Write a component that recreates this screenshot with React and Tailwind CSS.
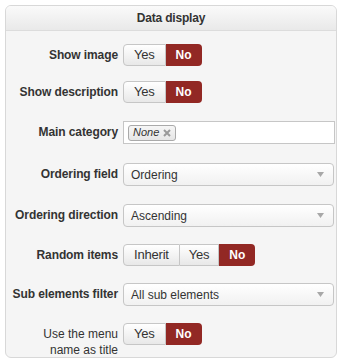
import React from 'react';

const Label = ({ children, bold = true }) => (
  <div
    className={`w-[112px] shrink-0 pt-[3px] text-right text-[12px] leading-[16px] text-[#333] ${bold ? 'font-bold tracking-[-0.1px]' : 'font-normal'}`}
  >
    {children}
  </div>
);

const Toggle = ({ options, active }) => (
  <div className="flex h-[22px]">
    {options.map((opt, i) => {
      const first = i === 0;
      const last = i === options.length - 1;
      if (opt === active) {
        return (
          <div
            key={opt}
            className={`flex items-center px-[10px] bg-[#922824] text-[12px] font-bold text-white ${last ? 'rounded-r-[4px]' : ''}`}
          >
            {opt}
          </div>
        );
      }
      return (
        <div
          key={opt}
          className={`flex items-center border border-[#c6c6c6] bg-gradient-to-b from-white to-[#e8e8e8] text-[13px] tracking-[-0.2px] text-[#333] ${first ? 'rounded-l-[4px] px-[10px]' : 'border-l-0 px-[9px]'}`}
        >
          {opt}
        </div>
      );
    })}
  </div>
);

const Select = ({ value }) => (
  <div className="flex h-[23px] w-[211px] items-center justify-between rounded-[4px] border border-[#c6c6c6] bg-gradient-to-b from-white to-[#f1f1f1] pl-[7px] pr-[9px] text-[12px] text-[#333]">
    <span>{value}</span>
    <svg width="7" height="5" viewBox="0 0 7 5">
      <polygon points="0,0 7,0 3.5,5" fill="#a8a8a8" />
    </svg>
  </div>
);

const Row = ({ label, mt, bold, children }) => (
  <div className={`flex items-start ${mt}`}>
    <Label bold={bold}>{label}</Label>
    <div className="ml-[5px]">{children}</div>
  </div>
);

export default function App() {
  return (
    <div className="min-h-[362px] bg-white pt-[5px] font-['Liberation_Sans',Arial,sans-serif]">
      <div className="ml-[5px] h-[353px] w-[332px] overflow-hidden rounded-[6px] border border-[#d8d8d8] bg-[#f5f5f5]">
        {/* Header */}
        <div className="flex h-[25px] items-center justify-center border-b border-[#dcdcdc] bg-gradient-to-b from-[#fafafa] to-[#e9e9e9] text-[12px] font-bold tracking-[-0.2px] text-[#333]">
          Data display
        </div>

        <Row label="Show image" mt="mt-[13px]">
          <Toggle options={['Yes', 'No']} active="No" />
        </Row>

        <Row label="Show description" mt="mt-[15px]">
          <Toggle options={['Yes', 'No']} active="No" />
        </Row>

        <Row label="Main category" mt="mt-[18px]">
          <div className="flex h-[23px] w-[212px] items-center border border-[#c6c6c6] bg-white pl-[4px]">
            <div className="flex h-[16px] items-center gap-[4px] rounded-[3px] border border-[#aaa] bg-gradient-to-b from-[#f6f6f6] to-[#e6e6e6] pl-[4px] pr-[4px]">
              <span className="text-[11px] italic text-[#333]">None</span>
              <svg width="8" height="8" viewBox="0 0 8 8">
                <path d="M1 1 L7 7 M7 1 L1 7" stroke="#999" strokeWidth="2" />
              </svg>
            </div>
          </div>
        </Row>

        <Row label="Ordering field" mt="mt-[19px]">
          <Select value="Ordering" />
        </Row>

        <Row label="Ordering direction" mt="mt-[18px]">
          <Select value="Ascending" />
        </Row>

        <Row label="Random items" mt="mt-[17px]">
          <Toggle options={['Inherit', 'Yes', 'No']} active="No" />
        </Row>

        <Row label="Sub elements filter" mt="mt-[17px]">
          <Select value="All sub elements" />
        </Row>

        <Row label={<>Use the menu<br />name as title</>} mt="mt-[17px]" bold={false}>
          <Toggle options={['Yes', 'No']} active="No" />
        </Row>
      </div>
    </div>
  );
}
